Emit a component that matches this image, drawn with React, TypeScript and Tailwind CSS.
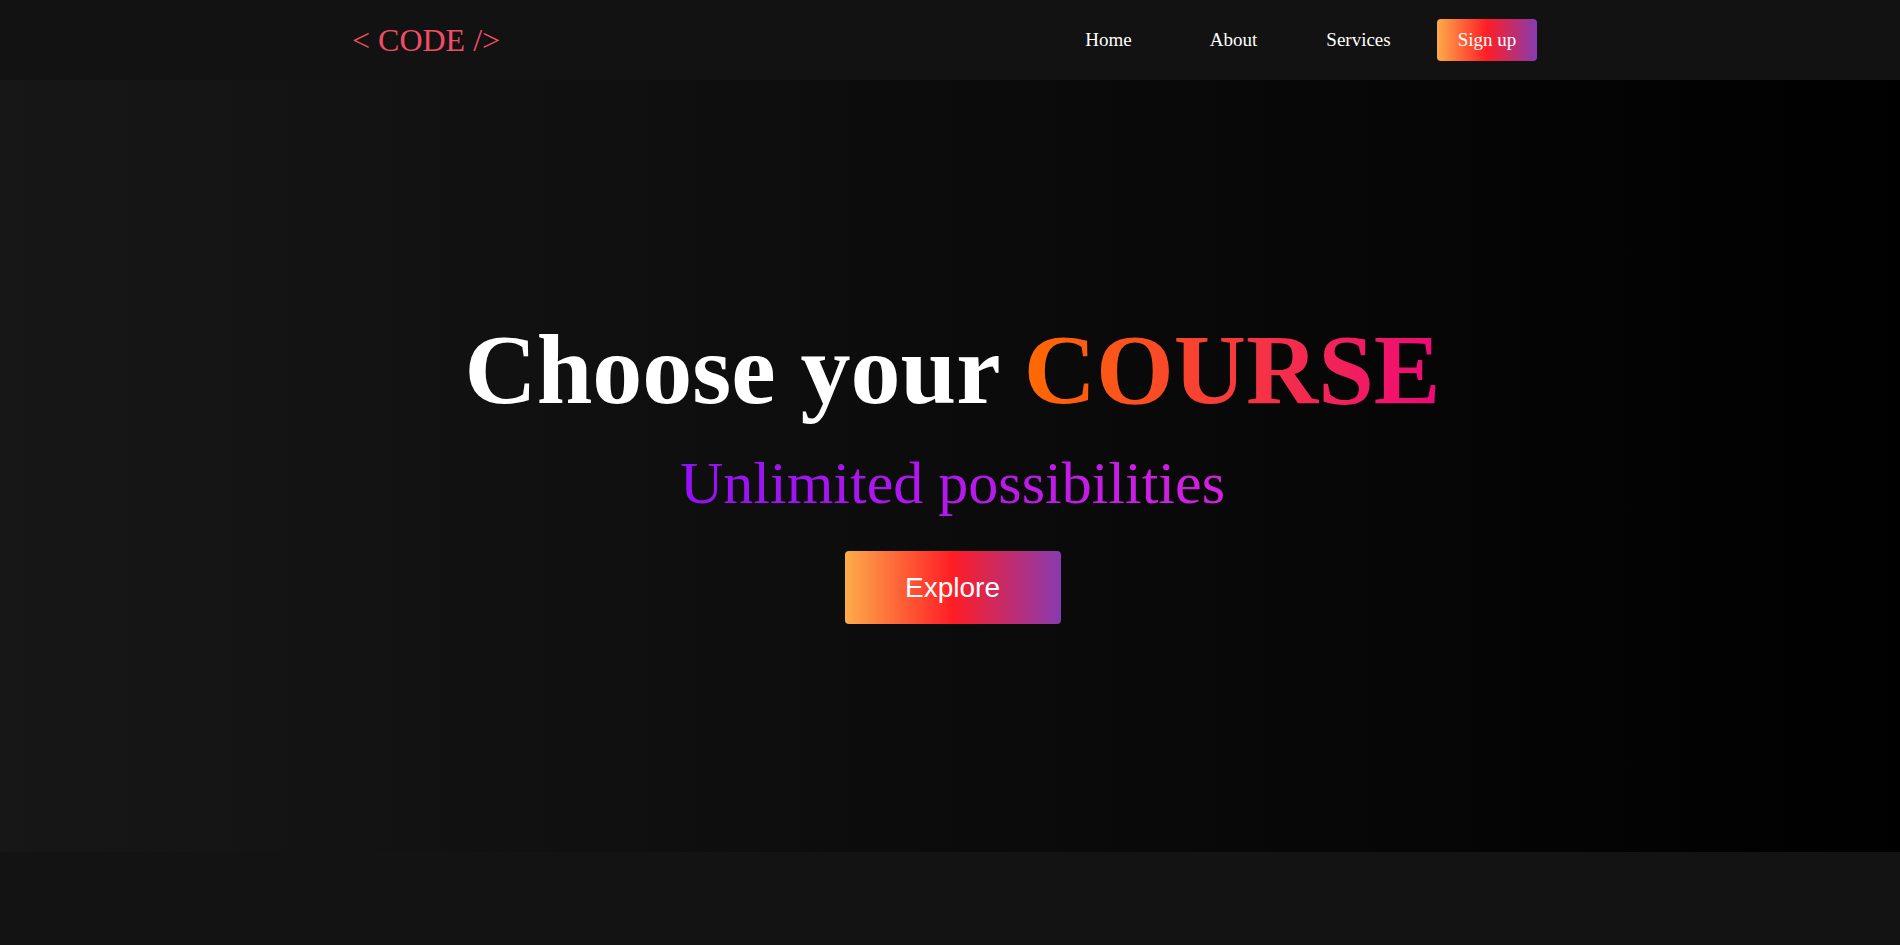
// Landing page: top nav + hero with gradient text and buttons
const serif = { fontFamily: '"Liberation Serif", "Times New Roman", serif' };

const links = ["Home", "About", "Services"];

const App = () => {
  return (
    <div className="min-h-[945px] w-full bg-[#131313]" style={serif}>
      {/* NAVBAR */}
      <nav className="h-[80px] bg-[#121212]">
        <div className="mx-auto flex h-full max-w-[1200px] items-center pl-[2px] pr-[13px]">
          <a className="text-[32px] leading-[37px] text-[#f14d64]">&lt; CODE /&gt;</a>
          <ul className="ml-auto flex items-center">
            {links.map((link) => (
              <li key={link} className="w-[125px] text-center text-[19px] leading-[22px] text-white">
                {link}
              </li>
            ))}
          </ul>
          <button className="ml-4 h-[42px] w-[100px] rounded-[4px] bg-linear-to-r/srgb from-[#fdab4a] via-[#ff1d25] to-[#873bb0] text-[19px] text-white">
            Sign up
          </button>
        </div>
      </nav>

      {/* HERO */}
      <section className="flex h-[772px] flex-col items-center justify-center bg-linear-to-r/srgb from-[#171717] to-black pl-[5px] pt-[4px]">
        <h1 className="text-[100px] font-bold leading-[115px] text-white">
          Choose your{" "}
          <span className="bg-linear-to-r/srgb from-[#ff6a00] to-[#ee0979] bg-clip-text text-transparent">
            COURSE
          </span>
        </h1>
        <p className="mt-[22px] bg-linear-to-r/srgb from-[#9410f7] to-[#d620e2] bg-clip-text text-[60px] leading-[69px] text-transparent">
          Unlimited possibilities
        </p>
        <button
          className="mt-[33px] h-[73px] w-[216px] rounded-[4px] bg-linear-to-r/srgb from-[#fdab4a] via-[#ff1d25] to-[#873bb0] text-[28px] text-white"
          style={{ fontFamily: '"Liberation Sans", Arial, sans-serif' }}
        >
          Explore
        </button>
      </section>
    </div>
  );
};

export default App;
